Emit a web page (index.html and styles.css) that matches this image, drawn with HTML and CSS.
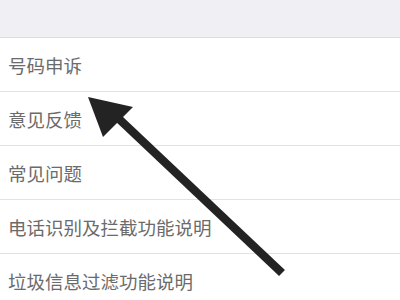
FILE: index.html
```html
<!DOCTYPE html>
<html lang="zh-CN">
<head>
<meta charset="utf-8">
<link rel="stylesheet" href="styles.css">
</head>
<body>
<div class="page">
  <div class="header"></div>
  <ul class="list">
    <li class="row">号码申诉</li>
    <li class="row">意见反馈</li>
    <li class="row">常见问题</li>
    <li class="row">电话识别及拦截功能说明</li>
    <li class="row">垃圾信息过滤功能说明</li>
  </ul>
  <svg class="arrow" width="400" height="300" viewBox="0 0 400 300">
    <line x1="118" y1="118" x2="282" y2="273" stroke="#232323" stroke-width="8.5"/>
    <polygon points="88,97 133,107 103,137" fill="#232323"/>
  </svg>
</div>
</body>
</html>
```
FILE: styles.css
```css
html, body {
  margin: 0;
  padding: 0;
  background: #ffffff;
}
.page {
  position: relative;
  width: 400px;
  height: 300px;
  overflow: hidden;
  font-family: "Noto Sans CJK SC", "Noto Sans", sans-serif;
}
.header {
  height: 37px;
  background: #efeff4;
  border-bottom: 1px solid #dcdcdc;
}
.list {
  list-style: none;
  margin: 0;
  padding: 0;
}
.row {
  height: 53px;
  display: flex;
  align-items: center;
  padding-left: 8px;
  font-size: 18.5px;
  color: #6b6b6b;
  border-bottom: 1px solid #e2e2e2;
  white-space: nowrap;
}
.arrow {
  position: absolute;
  left: 0;
  top: 0;
}
```
